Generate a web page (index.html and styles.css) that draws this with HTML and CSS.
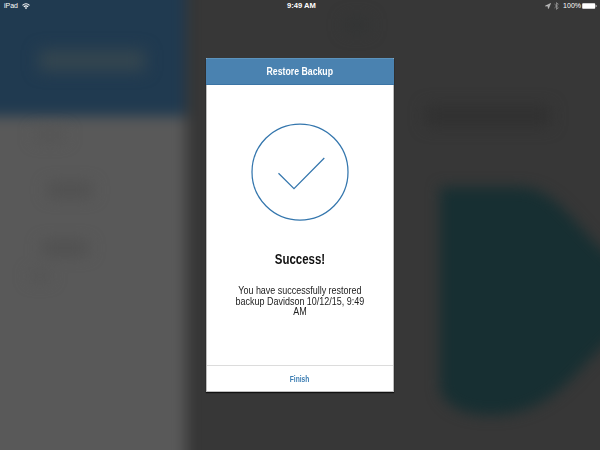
FILE: index.html
```html
<!DOCTYPE html>
<html lang="en">
<head>
<meta charset="utf-8">
<title>Restore Backup</title>
<link rel="stylesheet" href="styles.css">
</head>
<body>
<div class="screen">
  <svg class="backdrop" viewBox="0 0 600 450" aria-hidden="true">
    <defs>
      <filter id="soft" x="-20%" y="-20%" width="140%" height="140%" color-interpolation-filters="sRGB"><feGaussianBlur stdDeviation="7"/></filter>
      <filter id="smudge" x="-20%" y="-50%" width="140%" height="200%" color-interpolation-filters="sRGB"><feGaussianBlur stdDeviation="8"/></filter>
    </defs>
    <rect width="600" height="450" fill="#373737"/>
    <g filter="url(#soft)">
      <rect x="-60" y="-60" width="246" height="580" fill="#595959"/>
      <rect x="-60" y="-60" width="246" height="176" fill="#203a50"/>
      <path d="M440 187H518C556 187 574 226 606 253L640 285V315L606 343C575 371 552 415 490 415C459 415 440 401 440 386Z" fill="#172f32"/>
    </g>
    <g filter="url(#smudge)">
      <rect x="39" y="50" width="106" height="21" fill="#35464f"/>
      <rect x="426" y="106" width="124" height="20" fill="#303030"/>
      <rect x="48" y="184" width="44" height="12" fill="#4e4e4e"/>
      <rect x="42" y="242" width="46" height="12" fill="#4e4e4e"/>
      <rect x="30" y="272" width="20" height="8" fill="#525252"/>
      <rect x="35" y="130" width="30" height="10" fill="#535353"/>
      <rect x="345" y="18" width="24" height="14" fill="#323434"/>
    </g>
  </svg>

  <header class="status">
    <div class="status-left">
      <span>iPad</span>
      <svg width="8" height="7" viewBox="0 0 8 7"><path d="M.5 2.3Q4-.8 7.5 2.3M1.8 3.8Q4 1.9 6.2 3.8" fill="none" stroke="#fff" stroke-width="1.1"/><path d="M2.8 4.8Q4 3.8 5.2 4.8L4 6.2Z" fill="#fff"/></svg>
    </div>
    <div class="status-time">9:49 AM</div>
    <div class="status-right">
      <svg width="6" height="6" viewBox="0 0 6 6"><path d="M5.6.4 3.4 5.6 3 3H.4Z" fill="#aaa" stroke="#ddd" stroke-width=".5"/></svg>
      <svg class="bluetooth" width="5" height="8" viewBox="0 0 5 8"><path d="M.5 2.1 4.3 5.7 2.5 7.4V.6L4.3 2.3.5 5.9" fill="none" stroke="#999" stroke-width=".8"/></svg>
      <span>100%</span>
      <svg class="battery" width="15" height="6" viewBox="0 0 15 6"><rect x=".2" y=".2" width="13" height="5.6" rx=".8" fill="#fff"/><path d="M13.7 2h.8v2h-.8z" fill="#ddd"/></svg>
    </div>
  </header>

  <main class="stage">
    <section class="dialog">
      <h1 class="dialog-title"><span class="condensed">Restore Backup</span></h1>
      <div class="dialog-body">
        <svg class="check" width="98" height="98" viewBox="0 0 98 98"><g fill="none" stroke="#3476ad" stroke-width="1.25"><circle cx="49" cy="49" r="48"/><path d="M27.5 50.3 43 65.6 73.3 35"/></g></svg>
        <h2>Success!</h2>
        <p>You have successfully restored<br>backup Davidson 10/12/15, 9:49<br>AM</p>
      </div>
      <button class="finish" type="button"><span class="condensed">Finish</span></button>
    </section>
  </main>
</div>
</body>
</html>
```
FILE: styles.css
```css
* { box-sizing: border-box; }

body {
  margin: 0;
  overflow: hidden;
  background: #373737;
}

.screen {
  position: relative;
  width: 600px;
  height: 450px;
  overflow: hidden;
  display: flex;
  flex-direction: column;
}

.backdrop {
  position: absolute;
  inset: 0;
  width: 600px;
  height: 450px;
}

.status {
  position: relative;
  display: grid;
  grid-template-columns: 1fr auto 1fr;
  height: 12px;
  padding: 0 3px 0 4px;
  color: #fff;
  font: 7px/12px "Liberation Sans", sans-serif;
}

.status-left,
.status-right {
  display: flex;
  align-items: center;
}

.status-left { gap: 4px; }

.status-right { justify-content: flex-end; }

.status-time {
  font-size: 7.6px;
  font-weight: 700;
  padding-left: 2px;
}

.bluetooth { margin: 0 4px 0 3px; }

.battery { margin-left: 1px; }

.stage {
  position: relative;
  padding: 46px 206px 0;
}

.dialog {
  display: flex;
  flex-direction: column;
  width: 188px;
  height: 334px;
  background: #fff;
  border: 1px solid #bdbdbd;
  border-top-color: #5b93bd;
  box-shadow: 0 1px 1px #111;
  font-family: "Liberation Sans", sans-serif;
  text-align: center;
}

.condensed {
  display: inline-block;
  transform: scaleX(.76);
}

.dialog-title {
  margin: 0 -1px;
  height: 26px;
  background: #4a82b0;
  border-bottom: 1px solid #3b74a4;
  color: #fff;
  font-size: 11.5px;
  line-height: 25px;
  font-weight: 700;
}

.dialog-body {
  flex: 1;
  display: flex;
  flex-direction: column;
  align-items: center;
  padding-top: 38px;
}

.check { display: block; }

h2 {
  margin: 28px 0 0;
  color: #111;
  font-size: 15px;
  line-height: 20px;
  transform: scaleX(.765);
}

p {
  margin: 16px 0 0;
  color: #222;
  font-size: 11px;
  line-height: 10.6px;
  white-space: nowrap;
  transform: scaleX(.815);
}

.finish {
  height: 26px;
  padding: 2px 0 0;
  border: 0;
  border-top: 1px solid #dcdcdc;
  background: #fff;
  color: #3d7eb3;
  font: 700 8.5px/23px "Liberation Sans", sans-serif;
}

.finish .condensed { transform: scaleX(.78); }
```
